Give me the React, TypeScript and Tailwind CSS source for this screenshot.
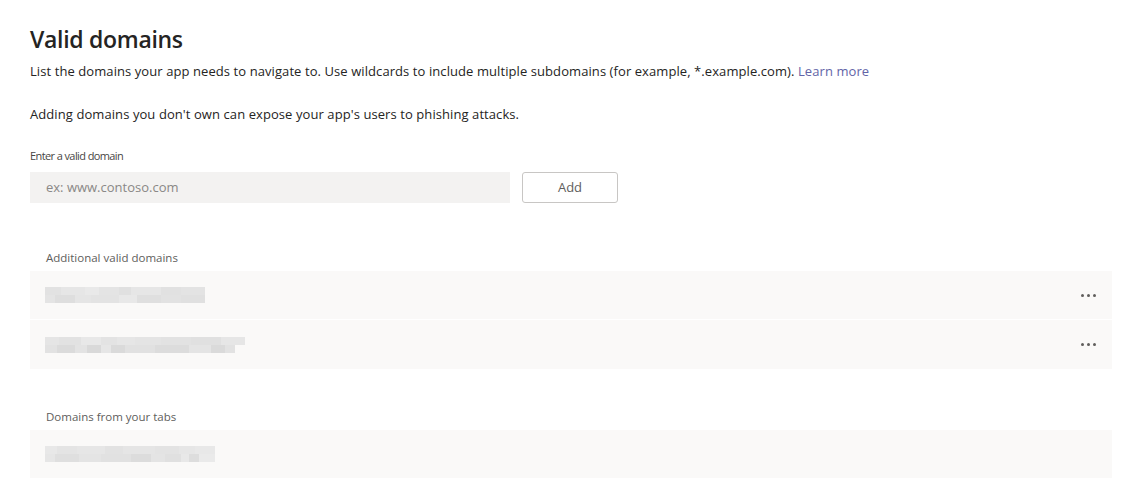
import React from "react";

type Px = [number, string];

// pixelated (blurred) domain names, two rows of blocks each
const row1: Px[][] = [
  [[16, "#e2e2e2"], [24, "#e6e6e6"], [14, "#e9e9e9"], [20, "#e4e4e4"], [12, "#e0e0e0"], [30, "#e6e6e6"], [20, "#e1e1e1"], [24, "#e3e3e3"]],
  [[10, "#e4e4e4"], [20, "#dedede"], [16, "#e5e5e5"], [28, "#e3e3e3"], [18, "#e8e8e8"], [24, "#dfdfdf"], [20, "#e2e2e2"], [24, "#e0e0e0"]],
];
const row2: Px[][] = [
  [[14, "#e5e5e5"], [22, "#e2e2e2"], [20, "#e8e8e8"], [16, "#e3e3e3"], [18, "#e6e6e6"], [26, "#e4e4e4"], [30, "#e2e2e2"], [30, "#e0e0e0"], [24, "#e6e6e6"]],
  [[12, "#e2e2e2"], [18, "#dbdbdb"], [12, "#e3e3e3"], [14, "#d9d9d9"], [10, "#e6e6e6"], [14, "#dadada"], [30, "#e1e1e1"], [34, "#dcdcdc"], [22, "#e4e4e4"], [14, "#dadada"], [10, "#e2e2e2"]],
];
const row3: Px[][] = [
  [[12, "#e8e8e8"], [20, "#e4e4e4"], [28, "#e6e6e6"], [18, "#e2e2e2"], [32, "#e5e5e5"], [24, "#e3e3e3"], [16, "#e6e6e6"], [20, "#e8e8e8"]],
  [[10, "#e6e6e6"], [24, "#dfdfdf"], [22, "#e4e4e4"], [30, "#e1e1e1"], [20, "#dcdcdc"], [14, "#e4e4e4"], [16, "#e0e0e0"], [8, "#e8e8e8"], [10, "#dddddd"], [16, "#eaeaea"]],
];

function Blur({ rows }: { rows: Px[][] }) {
  return (
    <div className="flex flex-col">
      {rows.map((r, i) => (
        <div key={i} className="flex h-[8px]">
          {r.map(([w, c], j) => (
            <span key={j} style={{ width: w, background: c }} />
          ))}
        </div>
      ))}
    </div>
  );
}

function Dots() {
  return (
    <div className="flex gap-[3px]">
      <span className="h-[3px] w-[3px] rounded-full bg-[#605e5c]" />
      <span className="h-[3px] w-[3px] rounded-full bg-[#605e5c]" />
      <span className="h-[3px] w-[3px] rounded-full bg-[#605e5c]" />
    </div>
  );
}

export default function App() {
  return (
    <div
      className="min-h-screen bg-white px-[30px] pt-[24px] text-[#252423]"
      style={{ fontFamily: '"Open Sans", "Noto Sans", sans-serif' }}
    >
      <h1 className="text-[23px] font-semibold leading-[30px] tracking-[-0.3px]">Valid domains</h1>
      <p className="mt-[8px] text-[13px] leading-[18px] tracking-[0.08px]">
        List the domains your app needs to navigate to. Use wildcards to include multiple subdomains (for example,
        *.example.com). <span className="text-[#6264a7]">Learn more</span>
      </p>
      <p className="mt-[25px] text-[13px] leading-[18px] tracking-[0.08px]">
        Adding domains you don&apos;t own can expose your app&apos;s users to phishing attacks.
      </p>

      <div className="mt-[26px] text-[11px] leading-[14px] tracking-[-0.6px] text-[#484644]">Enter a valid domain</div>
      <div className="mt-[9px] flex gap-[12px]">
        <div className="flex h-[31px] w-[480px] items-center bg-[#f3f2f1] px-[16px] text-[13px] text-[#8a8886]">
          ex: www.contoso.com
        </div>
        <button className="h-[31px] w-[96px] rounded-[3px] border border-[#c8c6c4] bg-white text-[13px] text-[#605e5c]">
          Add
        </button>
      </div>

      <div className="mt-[48px] px-[16px] text-[11.5px] leading-[14px] text-[#605e5c]">Additional valid domains</div>
      <div className="mt-[6px] w-[1082px] bg-[#faf9f8]">
        <div className="flex h-[49px] items-center justify-between border-b border-white pl-[15px] pr-[16px]">
          <Blur rows={row1} />
          <Dots />
        </div>
        <div className="flex h-[49px] items-center justify-between pl-[15px] pr-[16px]">
          <Blur rows={row2} />
          <Dots />
        </div>
      </div>

      <div className="mt-[41px] px-[16px] text-[11.5px] leading-[14px] text-[#605e5c]">Domains from your tabs</div>
      <div className="mt-[6px] flex h-[48px] w-[1082px] items-center bg-[#faf9f8] pl-[15px]">
        <Blur rows={row3} />
      </div>
    </div>
  );
}
